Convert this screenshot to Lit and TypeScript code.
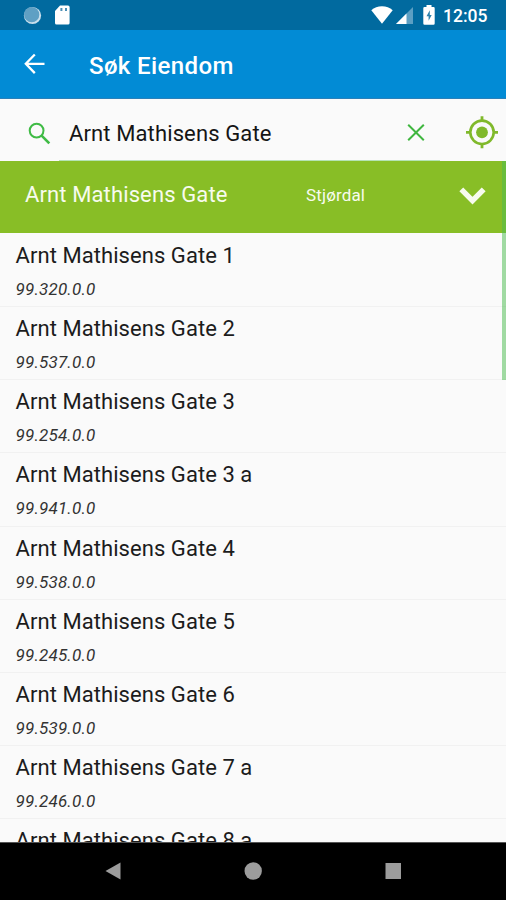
import { LitElement, html, css, nothing } from "lit";
import { customElement, property } from "lit/decorators.js";

interface Property {
  address: string;
  id?: string;
}

const results: Property[] = [
  { address: "Arnt Mathisens Gate 1", id: "99.320.0.0" },
  { address: "Arnt Mathisens Gate 2", id: "99.537.0.0" },
  { address: "Arnt Mathisens Gate 3", id: "99.254.0.0" },
  { address: "Arnt Mathisens Gate 3 a", id: "99.941.0.0" },
  { address: "Arnt Mathisens Gate 4", id: "99.538.0.0" },
  { address: "Arnt Mathisens Gate 5", id: "99.245.0.0" },
  { address: "Arnt Mathisens Gate 6", id: "99.539.0.0" },
  { address: "Arnt Mathisens Gate 7 a", id: "99.246.0.0" },
  { address: "Arnt Mathisens Gate 8 a" },
];

@customElement("status-bar")
class StatusBar extends LitElement {
  static styles = css`
    :host {
      display: flex;
      align-items: center;
      height: 30px;
      flex: none;
      background: #016a9f;
      color: #fff;
      padding: 0 18px 0 23px;
      box-sizing: border-box;
    }
    svg { display: block; flex: none; }
    .card { margin-left: 12px; }
    .wifi { margin-left: auto; }
    .signal { margin-left: 3px; }
    .battery { margin-left: 10px; }
    .time {
      margin-left: 8px;
      width: 45px;
      white-space: nowrap;
      font-size: 17.5px;
      font-weight: 500;
      line-height: 30px;
      padding-top: 2px;
    }
  `;
  render() {
    return html`
      <svg width="19" height="19" viewBox="0 0 19 19">
        <circle cx="9.5" cy="9.5" r="8.6" fill="#c9dfec" />
        <circle cx="8.7" cy="8.7" r="7.6" fill="#5fa0c4" />
      </svg>
      <svg class="card" width="16" height="20" viewBox="0 0 16 20">
        <path d="M6 .5h8a1.6 1.6 0 0 1 1.6 1.6V18a1.6 1.6 0 0 1-1.6 1.6H2.600A1.600 1.600 0 0 1 1 18V6z" fill="#fff" />
        <path d="M6.400 3h2v3h-2zM11 3h2v3h-2z" fill="#4b8fb5" />
      </svg>
      <svg class="wifi" width="22" height="18" viewBox="0 0 22 18">
        <path d="M11 17.800.3 4.200C3.200 1.700 6.900.3 11 .3s7.800 1.400 10.700 3.900z" fill="#fff" />
      </svg>
      <svg class="signal" width="17" height="18" viewBox="0 0 17 18">
        <path d="M0 18 17 1v17z" fill="#5c9fc3" />
        <path d="M0 18 10.500 7.500V18z" fill="#fff" />
      </svg>
      <svg class="battery" width="12" height="20" viewBox="0 0 12 20">
        <path d="M3.500 0h5v2h2A1.200 1.200 0 0 1 11.700 3.200v15.300a1.200 1.200 0 0 1-1.200 1.200h-9A1.200 1.200 0 0 1 .3 18.500V3.200A1.200 1.200 0 0 1 1.500 2h2z" fill="#fff" />
        <path d="M6.800 5.200 3.500 11.200h2.100v4.600L8.700 9.900H6.800z" fill="#2b80ac" />
      </svg>
      <span class="time">12:05</span>
    `;
  }
}

@customElement("result-row")
class ResultRow extends LitElement {
  @property() address = "";
  @property() number?: string;
  static styles = css`
    :host {
      display: block;
      flex: none;
      height: 73.15px;
      box-sizing: border-box;
      padding: 7px 15.5px 0;
      border-bottom: 1px solid #f1f1f1;
      white-space: nowrap;
    }
    .address {
      font-size: 22px;
      line-height: 30px;
      letter-spacing: 0.06px;
      color: #1c1c1c;
    }
    .number {
      margin-top: 5px;
      font-size: 17px;
      line-height: 26px;
      letter-spacing: 0.2px;
      font-style: italic;
      color: #333;
    }
  `;
  render() {
    return html`
      <div class="address">${this.address}</div>
      ${this.number ? html`<div class="number">${this.number}</div>` : nothing}
    `;
  }
}

@customElement("app-root")
class AppRoot extends LitElement {
  static styles = css`
    :host {
      display: flex;
      flex-direction: column;
      height: 900px;
      overflow: hidden;
      background: #fafafa;
      font-family: Roboto, "Noto Sans", sans-serif;
    }
    svg { display: block; flex: none; }
    .toolbar {
      display: flex;
      align-items: center;
      flex: none;
      height: 69px;
      box-sizing: border-box;
      padding: 0 24px;
      background: #028bd5;
      border-bottom: 1px solid #2b80b9;
      color: #fff;
    }
    .title {
      margin: 3px 0 0 44px;
      font-size: 24px;
      font-weight: 500;
      line-height: 32px;
      letter-spacing: 0.38px;
    }
    .search {
      display: flex;
      flex: none;
      height: 62px;
      padding-left: 28px;
    }
    .glass { margin: 23px 8px 0 0; }
    .field {
      display: flex;
      width: 381px;
      box-sizing: border-box;
      padding: 0 15px 0 10px;
      border-bottom: 1px solid #b5e3b4;
    }
    .query {
      flex: 1;
      font-size: 22px;
      line-height: 69px;
      letter-spacing: 0.12px;
      color: #151515;
      white-space: nowrap;
    }
    .clear { margin-top: 25px; }
    .locate { margin: 16px 0 0 25px; }
    .results {
      position: relative;
      flex: 1;
      min-height: 0;
      overflow: hidden;
      display: flex;
      flex-direction: column;
    }
    .group {
      display: flex;
      align-items: center;
      flex: none;
      height: 72px;
      margin-bottom: 1px;
      padding: 0 20px 0 25px;
      background: #88be26;
      color: #f7fbee;
    }
    .street {
      width: 281px;
      font-size: 22px;
      line-height: 30px;
      letter-spacing: 0.12px;
      padding-bottom: 4px;
    }
    .town {
      flex: 1;
      font-size: 17px;
      line-height: 24px;
      letter-spacing: 0.15px;
      padding-bottom: 4px;
    }
    .chevron { margin-bottom: 2px; }
    .thumb {
      position: absolute;
      top: 0;
      right: 0;
      width: 4px;
      height: 219px;
      background: rgba(76, 187, 80, 0.52);
    }
    .nav {
      display: flex;
      flex: none;
      height: 58px;
      box-sizing: border-box;
      padding-bottom: 2px;
      border-top: 1px solid #555;
      background: #000;
      align-items: center;
      justify-content: center;
      gap: 123px;
    }
  `;
  render() {
    return html`
      <status-bar></status-bar>
      <header class="toolbar">
        <svg width="21" height="22" viewBox="0 0 21 22">
          <path d="M10.800 1.500 1.800 10.800l9 9.300M1.800 10.800H20.500" fill="none" stroke="#fff" stroke-width="2.300" />
        </svg>
        <div class="title">Søk Eiendom</div>
      </header>
      <div class="search">
        <svg class="glass" width="23" height="23" viewBox="0 0 23 23">
          <circle cx="8.600" cy="8.600" r="6.900" fill="none" stroke="#3fbb45" stroke-width="2" />
          <path d="M13.600 13.600l7.700 7.700" stroke="#3fbb45" stroke-width="2.600" />
        </svg>
        <div class="field">
          <div class="query">Arnt Mathisens Gate</div>
          <svg class="clear" width="18" height="18" viewBox="0 0 18 18">
            <path d="M1.200 .7l15.600 15.600M16.800 .7 1.200 16.300" stroke="#3fb63f" stroke-width="2" />
          </svg>
        </div>
        <svg class="locate" width="34" height="34" viewBox="0 0 34 34">
          <circle cx="17" cy="17.300" r="11.700" fill="none" stroke="#80b92b" stroke-width="2.600" />
          <circle cx="17" cy="17.300" r="5.900" fill="#80b92b" />
          <path d="M17 1.300v5M17 28.300v5M1 17.300h5M28 17.300h5" stroke="#80b92b" stroke-width="2.800" />
        </svg>
      </div>
      <div class="results">
        <div class="group">
          <span class="street">Arnt Mathisens Gate</span>
          <span class="town">Stjørdal</span>
          <svg class="chevron" width="27" height="18" viewBox="0 0 27 18">
            <path d="M2.300 2.300 13.500 13.700 24.700 2.300" fill="none" stroke="#f7fbee" stroke-width="5.400" />
          </svg>
        </div>
        ${results.map(
          (r) => html`<result-row .address=${r.address} .number=${r.id}></result-row>`
        )}
        <div class="thumb"></div>
      </div>
      <nav class="nav">
        <svg width="16" height="18" viewBox="0 0 16 18"><path d="M15.500 .5v17L.5 9z" fill="#9c9c9c" /></svg>
        <svg width="18" height="18" viewBox="0 0 18 18"><circle cx="9.200" cy="9" r="8.700" fill="#9c9c9c" /></svg>
        <svg width="16" height="16" viewBox="0 0 16 16"><path d="M.5 0H16v16H.5z" fill="#9c9c9c" /></svg>
      </nav>
    `;
  }
}
